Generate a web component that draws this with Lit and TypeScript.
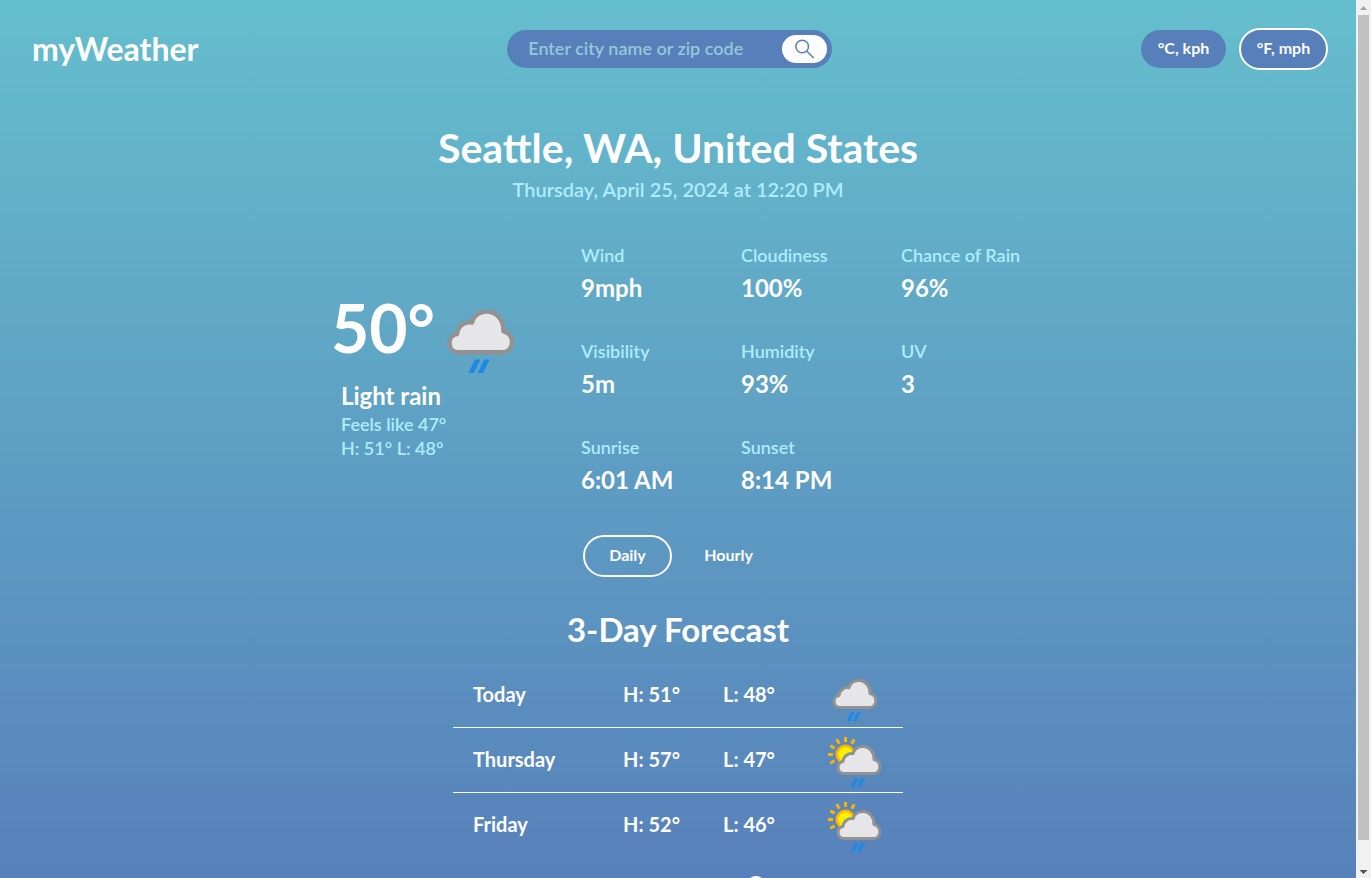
import { LitElement, html, svg, css } from "lit";
import { customElement, state, property } from "lit/decorators.js";
import { classMap } from "lit/directives/class-map.js";

type Icon = "rain" | "sun-rain";

const facts = [
  ["Wind", "9mph"],
  ["Cloudiness", "100%"],
  ["Chance of Rain", "96%"],
  ["Visibility", "5m"],
  ["Humidity", "93%"],
  ["UV", "3"],
  ["Sunrise", "6:01 AM"],
  ["Sunset", "8:14 PM"],
];

const days: { day: string; high: number; low: number; icon: Icon }[] = [
  { day: "Today", high: 51, low: 48, icon: "rain" },
  { day: "Thursday", high: 57, low: 47, icon: "sun-rain" },
  { day: "Friday", high: 52, low: 46, icon: "sun-rain" },
];

const cloud = svg`
  <path d="M17 45.500 C9.500 45.500 9 34.500 16 33.400 C16.500 28 21.500 24.800 26 25.700 C28.500 14.500 47.500 16 47 31.500 C55 33 54.500 45.500 46.500 45.500 Z"
    fill="#e6e6e8" stroke="#929292" stroke-width="3" stroke-linejoin="round"/>
  <path d="M28 50.300h3.600l-4.400 9h-3.600z M34.200 50.300h3.600l-4.400 9h-3.600z" fill="#1e88e5"/>`;

const rays = [-120, -90, -60, -30, 0, 30].map(
  (a) => svg`<rect x="-1.500" y="-17.500" width="3" height="5" fill="#ffb300" transform="translate(22.500 26.500) rotate(${a})"/>`
);

@customElement("weather-icon")
class WeatherIcon extends LitElement {
  @property() kind: Icon = "rain";
  static styles = css`
    :host { display: block; }
    svg { display: block; width: 100%; height: 100%; }
  `;
  render() {
    return this.kind === "rain"
      ? html`<svg viewBox="0 0 64 64" aria-hidden="true">${cloud}</svg>`
      : html`<svg viewBox="0 0 64 64" aria-hidden="true">
          ${rays}
          <circle cx="22.500" cy="26.500" r="8.700" fill="#fff000" stroke="#ffb300" stroke-width="2.600"/>
          <g transform="translate(4 0)">${cloud}</g>
        </svg>`;
  }
}

@customElement("app-root")
class AppRoot extends LitElement {
  @state() unit = "f";
  @state() view = "daily";

  static styles = css`
    :host {
      display: grid;
      grid-template-columns: minmax(0, 1fr) 15px;
      height: 100vh;
      overflow: hidden;
      font-family: Lato, "Open Sans", sans-serif;
      font-weight: 700;
      color: #fdfdfd;
    }
    * { box-sizing: border-box; }
    button, input { font: inherit; color: inherit; border: 0; margin: 0; }
    h1, h2, p, dl, dd { margin: 0; font-weight: 700; }
    .pane { overflow: hidden; min-height: 0; }
    .page {
      display: flex;
      flex-direction: column;
      align-items: center;
      background: linear-gradient(#65becd, #577fba);
      padding-bottom: 8px;
    }
    header {
      align-self: stretch;
      display: flex;
      justify-content: space-between;
      align-items: center;
      height: 98px;
      padding: 0 28px 0 32px;
    }
    .logo { font-size: 32px; line-height: 48px; color: inherit; text-decoration: none; }
    .search {
      display: flex;
      align-items: center;
      width: 325px;
      height: 38px;
      padding: 0 5px 0 21px;
      border-radius: 19px;
      background: #577fba;
    }
    .search input {
      flex: 1;
      min-width: 0;
      padding: 0 0 2px;
      background: none;
      font-size: 18px;
      font-weight: 600;
      line-height: 24px;
    }
    .search input::placeholder { color: #92c9d9; opacity: 1; }
    .go {
      display: grid;
      place-items: center;
      width: 45px;
      height: 28px;
      padding: 0;
      border-radius: 14px;
      background: #fdfdfd;
    }
    .go svg { width: 20px; height: 20px; }
    .units, .tabs { display: flex; align-items: center; gap: 13px; }
    .pill {
      height: 38px;
      min-width: 85px;
      padding: 0 12px 2px;
      border-radius: 21px;
      background: none;
      font-size: 16px;
      line-height: 24px;
    }
    .units .pill { background: #577fba; }
    .pill.on { height: 42px; min-width: 89px; border: 2px solid #fdfdfd; }
    .place { margin-top: 23px; text-align: center; }
    h1 { font-size: 41px; line-height: 54px; }
    .date { font-size: 20px; font-weight: 600; line-height: 28px; color: #aeecfb; }
    .now {
      display: grid;
      grid-template-columns: 250px 450px;
      align-items: center;
      margin-top: 40px;
      padding-left: 6px;
    }
    .summary { padding-top: 6px; }
    .big { display: flex; align-items: center; }
    .temp { width: 102px; padding-bottom: 8px; font-size: 66px; line-height: 80px; }
    .big weather-icon { width: 96px; height: 96px; }
    .text { padding-left: 10px; }
    .condition { font-size: 24px; line-height: 32px; }
    .minor { font-size: 18px; font-weight: 600; line-height: 24px; color: #aeecfb; }
    .facts { display: grid; grid-template-columns: repeat(3, 160px); row-gap: 36px; }
    .facts dt { margin-bottom: 5px; font-size: 18px; font-weight: 600; line-height: 24px; color: #aeecfb; }
    .facts dd { font-size: 24px; line-height: 32px; }
    .facts div { height: 60px; }
    .tabs { margin-top: 40px; padding-right: 2px; height: 42px; gap: 14px; }
    h2 { margin-top: 28px; font-size: 33px; line-height: 48px; }
    table { width: 450px; margin-top: 9px; border-collapse: collapse; table-layout: fixed; font-size: 20px; line-height: 24px; }
    tr + tr { border-top: 1px solid #fdfdfd; }
    th, td { height: 65px; padding: 0; font-weight: 700; text-align: left; }
    th { width: 170px; padding-left: 20px; }
    th, .deg { padding-bottom: 1px; }
    .deg { width: 100px; }
    td weather-icon { width: 64px; height: 64px; }
    footer { margin-top: 19px; padding-left: 156px; }
    footer svg { display: block; width: 20px; height: 20px; }
    .scroll {
      display: flex;
      flex-direction: column;
      align-items: center;
      background: #f1f1f1;
    }
    .scroll svg { width: 15px; height: 15px; flex: none; }
    .track { flex: 1; width: 11px; }
    .thumb { height: 97.3%; background: #c1c1c1; }
  `;

  unitButton(id: string, text: string) {
    return html`<button class=${classMap({ pill: true, on: this.unit === id })} @click=${() => (this.unit = id)}>${text}</button>`;
  }
  tabButton(id: string, text: string) {
    return html`<button class=${classMap({ pill: true, on: this.view === id })} @click=${() => (this.view = id)}>${text}</button>`;
  }

  render() {
    return html`
      <div class="pane">
        <div class="page">
          <header>
            <a class="logo" href="#">myWeather</a>
            <form class="search" @submit=${(e: Event) => e.preventDefault()}>
              <input type="text" aria-label="City name or zip code" placeholder="Enter city name or zip code" />
              <button class="go" aria-label="Search">
                <svg viewBox="0 0 20 20" fill="none" stroke="#577fba" stroke-width="1.500">
                  <circle cx="7.200" cy="7.500" r="6.300" /><path d="M11.700 12l7 7" />
                </svg>
              </button>
            </form>
            <div class="units">${this.unitButton("c", "°C, kph")}${this.unitButton("f", "°F, mph")}</div>
          </header>
          <section class="place">
            <h1>Seattle, WA, United States</h1>
            <p class="date">Thursday, April 25, 2024 at 12:20 PM</p>
          </section>
          <section class="now">
            <div class="summary">
              <div class="big"><span class="temp">50°</span><weather-icon kind="rain"></weather-icon></div>
              <div class="text">
                <p class="condition">Light rain</p>
                <p class="minor">Feels like 47°</p>
                <p class="minor">H: 51° L: 48°</p>
              </div>
            </div>
            <dl class="facts">${facts.map(([k, v]) => html`<div><dt>${k}</dt><dd>${v}</dd></div>`)}</dl>
          </section>
          <div class="tabs">${this.tabButton("daily", "Daily")}${this.tabButton("hourly", "Hourly")}</div>
          <h2>3-Day Forecast</h2>
          <table>
            <tbody>
              ${days.map(
                (d) => html`<tr>
                  <th scope="row">${d.day}</th>
                  <td class="deg">H: ${d.high}°</td>
                  <td class="deg">L: ${d.low}°</td>
                  <td><weather-icon kind=${d.icon}></weather-icon></td>
                </tr>`
              )}
            </tbody>
          </table>
          <footer><svg viewBox="0 0 20 20" aria-hidden="true"><circle cx="10" cy="10" r="10" fill="#fdfdfd" /></svg></footer>
        </div>
      </div>
      <div class="scroll" aria-hidden="true">
        <svg viewBox="0 0 15 15"><path d="M4 10l3.500-4 3.500 4z" fill="#a3a3a3" /></svg>
        <div class="track"><div class="thumb"></div></div>
        <svg viewBox="0 0 15 15"><path d="M3.500 7l4 4 4-4z" fill="#505050" /></svg>
      </div>
    `;
  }
}
